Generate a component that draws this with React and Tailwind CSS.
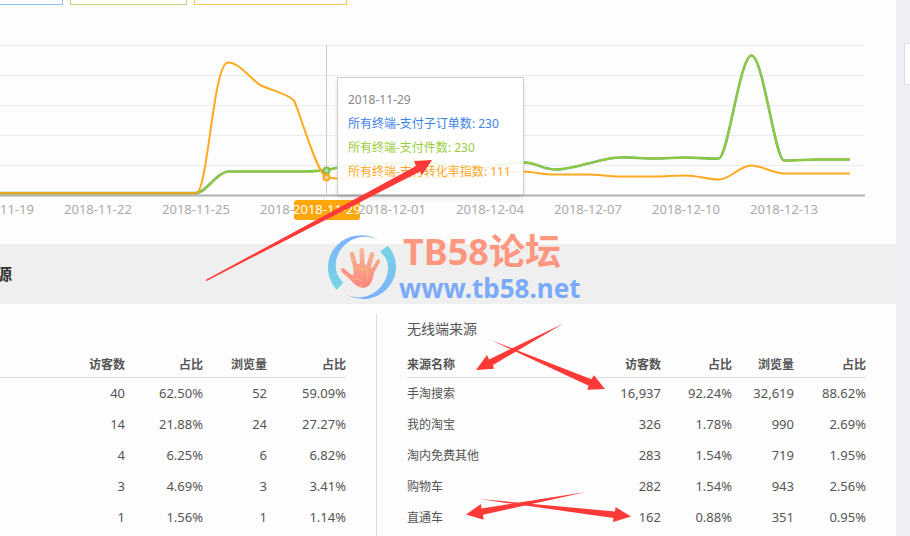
import React from 'react';

const axisLabels = [
  { x: 0, text: '2018-11-19' },
  { x: 98, text: '2018-11-22' },
  { x: 196, text: '2018-11-25' },
  { x: 294, text: '2018-11-28' },
  { x: 392, text: '2018-12-01' },
  { x: 490, text: '2018-12-04' },
  { x: 588, text: '2018-12-07' },
  { x: 686, text: '2018-12-10' },
  { x: 784, text: '2018-12-13' },
];

const gridLines = [45, 75, 105, 135, 165];

const pcRows = [
  ['40', '62.50%', '52', '59.09%'],
  ['14', '21.88%', '24', '27.27%'],
  ['4', '6.25%', '6', '6.82%'],
  ['3', '4.69%', '3', '3.41%'],
  ['1', '1.56%', '1', '1.14%'],
];

const wirelessRows = [
  ['手淘搜索', '16,937', '92.24%', '32,619', '88.62%'],
  ['我的淘宝', '326', '1.78%', '990', '2.69%'],
  ['淘内免费其他', '283', '1.54%', '719', '1.95%'],
  ['购物车', '282', '1.54%', '943', '2.56%'],
  ['直通车', '162', '0.88%', '351', '0.95%'],
];

const tooltipItems = [
  { label: '所有终端-支付子订单数', value: '230', color: 'text-[#3b82e6]' },
  { label: '所有终端-支付件数', value: '230', color: 'text-[#9acd3c]' },
  { label: '所有终端-支付转化率指数', value: '111', color: 'text-[#ffa726]' },
];

const ordersPath =
  'M0 193 H196 C206 193 217 171.5 229 171.5 H294 C305 171.5 316 171.5 326 170 C338 168 348 164 359 164 C380 163 400 163 425 163 C446 163 460 168 482 167 C498 166 508 162.5 524 162.5 C538 163 543 169.5 555 169.5 C567 169.5 577 166 588 163.5 C599 161 609 157.5 620 157.5 C631 157 642 158.5 653 158.5 C664 158.5 675 157.5 686 157.5 C697 157.5 711 159 719 158.5 C728 157 740 55.5 751.5 55.5 C763 55.5 775 160 784 160.5 C795 160.5 806 159.5 817 159.5 H850';

const ratePath =
  'M0 193 H196 C208 193 213 62.5 228 62.5 C240 62.5 251 80 261 85.5 C272 90.5 288 94 294 100.5 C299 110 316 171 326 177 C338 180 350 178 370 178 H440 C470 178 490 171 524 171.5 C534 172 544 174.5 555 174.5 H588 C599 174.5 609 176.5 620 176.5 H653 C664 176.5 675 175.5 686 175.5 C697 175.5 708 179.5 719 179.5 C730 179.5 740 165.5 751 165.5 C762 165.5 773 173.5 784 173.5 H850';

const Filters = () => (
  <div className="flex h-[5px] gap-[7px]">
    <div className="w-[63px] border-r border-b border-[#8ec2fa]" />
    <div className="w-[117px] border-x border-b border-[#b5da78]" />
    <div className="w-[153px] border-x border-b border-[#ffc45c]" />
  </div>
);

const TrendChart = () => (
  <div className="relative">
    <svg viewBox="0 5 896 239" className="block w-full" fill="none">
      {gridLines.map((y) => (
        <path key={y} d={`M0 ${y + 0.5} H864`} stroke="#ececec" />
      ))}
      <path d="M0 195.5 H865" stroke="#b2b2b2" strokeWidth="2" />
      <path d="M326.5 45 V195" stroke="#cccccc" />
      <path d={ordersPath} stroke="#6db08a" strokeWidth="2.6" />
      <path d={ordersPath} stroke="#92cb32" strokeWidth="1.8" />
      <path d={ratePath} stroke="#ffa91f" strokeWidth="2" />
      <path d="M0 193.5 H197" stroke="#d3a52a" strokeWidth="2" />
      <circle cx="326.5" cy="170.5" r="3" fill="#b9d3c6" stroke="#7cc242" strokeWidth="2" />
      <circle cx="326.5" cy="177.5" r="3" fill="#e8d3ae" stroke="#ffa91f" strokeWidth="2" />
      <g fontSize="13" textAnchor="middle" fill="#aaaaaa">
        {axisLabels.map((label) => (
          <text key={label.text} x={label.x} y="214">{label.text}</text>
        ))}
        <rect x="294" y="200" width="66" height="20" rx="3" fill="#ffa60a" />
        <text x="327" y="214" fill="#ffffff">2018-11-29</text>
      </g>
    </svg>
    <div className="absolute top-[72px] left-[337px] h-[118px] w-[187px] border border-[#cccccc] bg-white/90 px-[10px] pt-[10px] text-[12px] leading-[24px] shadow-md">
      <p className="text-[#888888]">2018-11-29</p>
      {tooltipItems.map((item) => (
        <p key={item.label} className={`whitespace-nowrap ${item.color}`}>
          {item.label}: {item.value}
        </p>
      ))}
    </div>
  </div>
);

const PcTable = () => (
  <table className="w-full table-fixed text-right text-[13px] text-[#555555]">
    <colgroup>
      <col />
      <col className="w-[78px]" />
      <col className="w-[64px]" />
      <col className="w-[79px]" />
    </colgroup>
    <thead>
      <tr className="h-[28px] border-b border-[#dddddd] text-[12px] *:pt-1">
        <th>访客数</th>
        <th>占比</th>
        <th>浏览量</th>
        <th>占比</th>
      </tr>
    </thead>
    <tbody>
      {pcRows.map((row, index) => (
        <tr key={index} className="h-[31px] *:pt-[2px]">
          {row.map((cell, i) => (
            <td key={i}>{cell}</td>
          ))}
        </tr>
      ))}
    </tbody>
  </table>
);

const WirelessTable = () => (
  <table className="w-full table-fixed text-right text-[13px] text-[#555555]">
    <colgroup>
      <col />
      <col className="w-[71px]" />
      <col className="w-[71px]" />
      <col className="w-[62px]" />
      <col className="w-[72px]" />
    </colgroup>
    <thead>
      <tr className="h-[28px] border-b border-[#dddddd] text-[12px] *:pt-1">
        <th className="text-left">来源名称</th>
        <th>访客数</th>
        <th>占比</th>
        <th>浏览量</th>
        <th>占比</th>
      </tr>
    </thead>
    <tbody>
      {wirelessRows.map(([name, ...cells]) => (
        <tr key={name} className="h-[31px] *:pt-[2px]">
          <td className="text-left text-[12px]">{name}</td>
          {cells.map((cell, i) => (
            <td key={i}>{cell}</td>
          ))}
        </tr>
      ))}
    </tbody>
  </table>
);

const HandLogo = () => (
  <svg viewBox="24 12 204 198" className="h-[66px] w-[68px]" fill="none">
    <defs>
      <linearGradient id="arcLeft" x1="0" y1="0" x2="0" y2="1">
        <stop offset="0" stopColor="#7db2fd" />
        <stop offset="1" stopColor="#76d5e2" />
      </linearGradient>
      <linearGradient id="arcRight" x1="0" y1="0" x2="0" y2="1">
        <stop offset="0" stopColor="#76d5e2" />
        <stop offset="1" stopColor="#7db2fd" />
      </linearGradient>
      <linearGradient id="hand" gradientUnits="userSpaceOnUse" x1="0" y1="50" x2="0" y2="175">
        <stop offset="0" stopColor="#f8bd94" />
        <stop offset="1" stopColor="#fb8580" />
      </linearGradient>
    </defs>
    <path d="M175 28 C95 -9 24 45 24 112 C24 140 35 162 50 180 L70 158 C54 141 46 124 47 104 C50 45 110 2 175 28 Z" fill="url(#arcLeft)" />
    <path d="M203 47 L180 65 C200 82 206 99 204 120 C197 178 137 222 77 193 C150 233 228 181 228 110 C228 85 218 63 203 47 Z" fill="url(#arcRight)" />
    <g stroke="url(#hand)" strokeLinecap="round" strokeLinejoin="round">
      <path d="M69 121 Q84 136 104 149" strokeWidth="13" />
      <path d="M96 72 L109 120" strokeWidth="14" />
      <path d="M125.5 61 L127 118" strokeWidth="14" />
      <path d="M156 73 L143 120" strokeWidth="14" />
      <path d="M175 94 L152 133" strokeWidth="12" />
    </g>
    <path d="M101 104 Q126 97 150 110 L163 119 C161 142 155 161 144 169 Q128 178 113 169 C102 162 95 155 84 141 L100 135 Z" fill="url(#hand)" />
    <g stroke="#f6c66f" strokeWidth="2" strokeLinecap="round">
      <path d="M95 149 C110 143 125 148 127 158 C128 166 122 171 116 171" />
      <path d="M102 118 Q112 105 124 115 M118 120 Q142 121 151 109 M141 119 Q146 130 143 145" />
      <path d="M91 93 L102 91 M121 86 L132 86 M148 94 L158 96" strokeWidth="1" />
    </g>
  </svg>
);

const Watermark = () => (
  <div className="absolute top-[234px] left-[328px] flex gap-[3px] font-bold whitespace-nowrap">
    <HandLogo />
    <div>
      <p className="pl-1 text-[36px] leading-[36px] text-[#fd977f]">TB58论坛</p>
      <p className="text-[26px] leading-[36px] text-[#7aabfb]">www.tb58.net</p>
    </div>
  </div>
);

const Arrows = () => (
  <svg viewBox="0 0 910 536" className="pointer-events-none absolute top-0 left-0 h-[536px] w-[910px]" fill="#fd3a37">
    <path d="M205.5 280 L416 166 L414 161 L432 160 L422 175 L420 171.5 L206.5 281 Z" />
    <path d="M563.5 323.5 L489 359.5 L487 355 L476 370 L494 368.7 L493 365 Z" />
    <path d="M491 340 L591.3 379.3 L594 375.3 L605 389 L587.3 389.7 L588.7 385.7 Z" />
    <path d="M586 492 L481.5 508.5 L481 504 L466 514.5 L483.7 519.7 L483 514.7 Z" />
    <path d="M479 499 L615 511.5 L615.5 507 L631 516.5 L613 522 L613.5 518 Z" />
  </svg>
);

const App = () => {
  return (
    <div className="relative flex min-h-screen overflow-hidden bg-[#eeeff5] font-['Noto_Sans','Noto_Sans_CJK_SC',sans-serif]">
      <main className="min-w-0 flex-1 bg-[#fdfdfd]">
        <Filters />
        <TrendChart />
        <h2 className="flex h-[60px] items-center bg-[#efefef] text-[16px] font-bold text-[#333333]">
          <span className="-ml-1">源</span>
        </h2>
        <div className="flex pt-[10px]">
          <section className="w-[376px] pt-[35px] pr-[30px]">
            <PcTable />
          </section>
          <section className="min-h-[222px] flex-1 border-l border-[#dddddd] pr-[30px] pl-[30px]">
            <h3 className="h-[35px] pt-[5px] text-[14px] leading-[20px] text-[#555555]">无线端来源</h3>
            <WirelessTable />
          </section>
        </div>
      </main>
      <aside className="w-[14px] pt-[43px] pl-2">
        <div className="h-[42px] border-y border-l border-[#dddddd] bg-[#fdfdfd]" />
      </aside>
      <Watermark />
      <Arrows />
    </div>
  );
};

export default App;
